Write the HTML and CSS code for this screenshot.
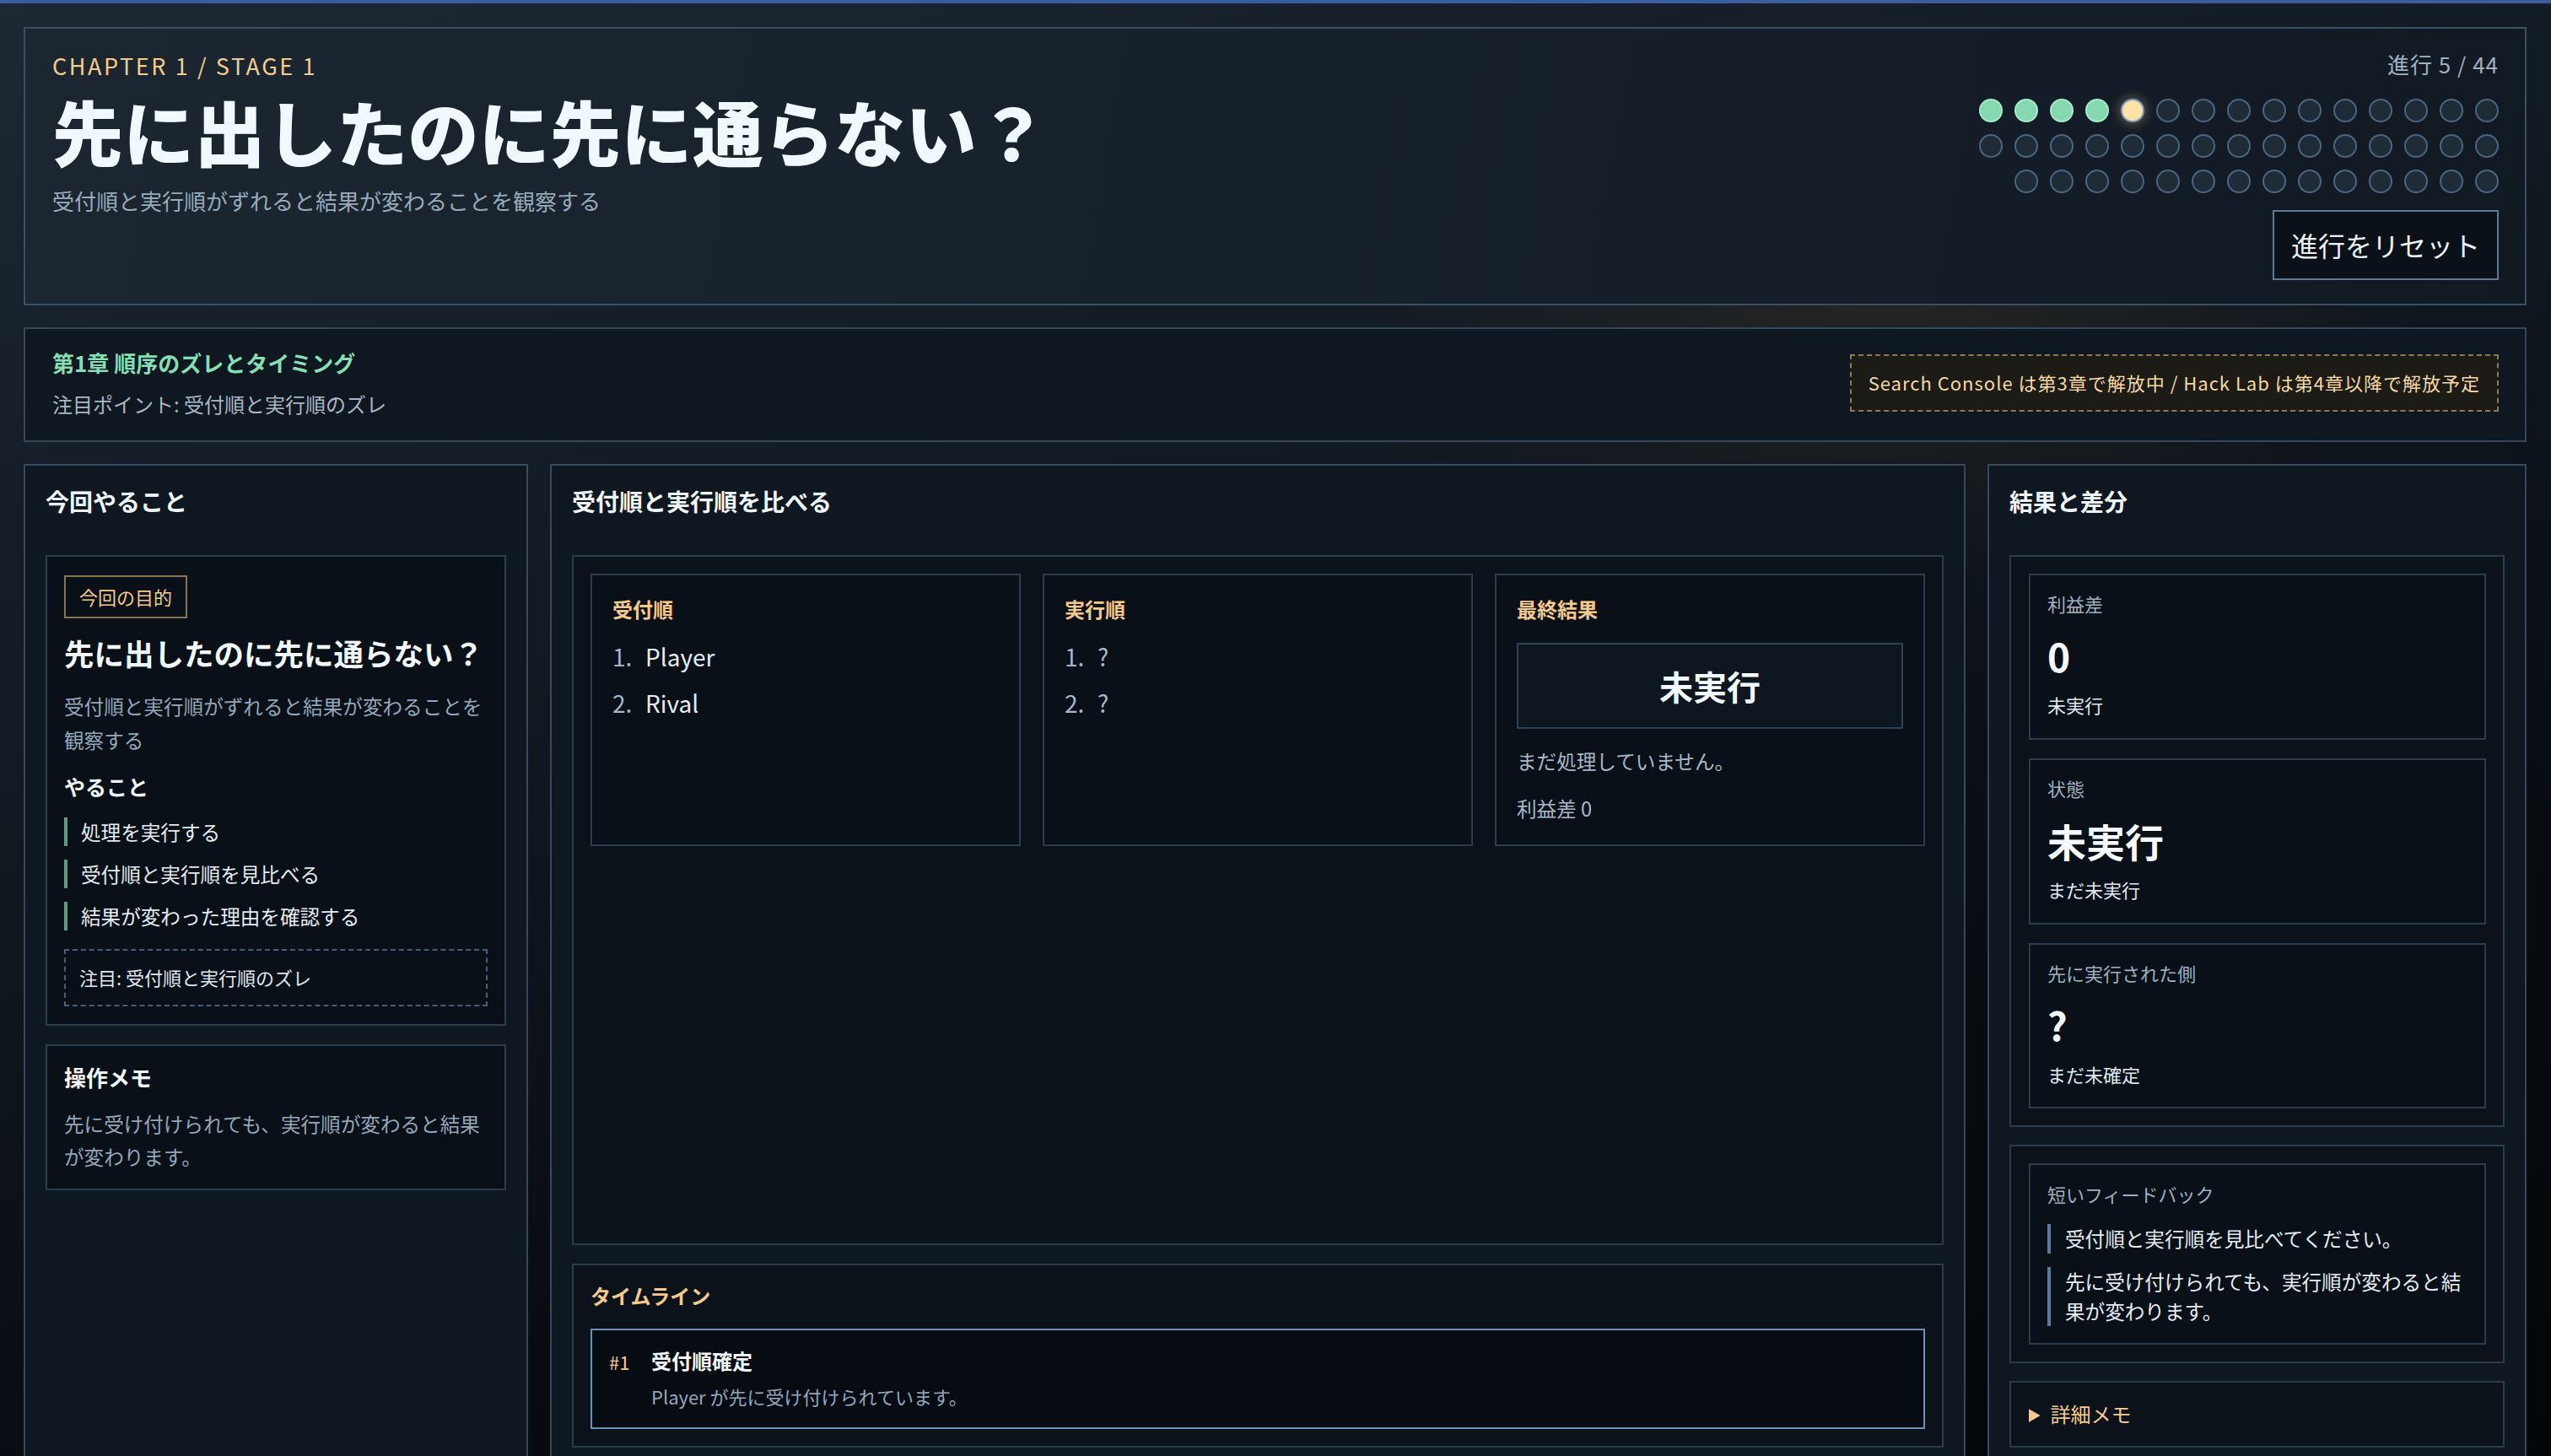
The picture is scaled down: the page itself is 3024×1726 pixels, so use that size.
FILE: index.html
```html
<!DOCTYPE html>
<html lang="ja">
<head>
	<meta charset="UTF-8">
	<title>先に出したのに先に通らない？</title>
	<link rel="stylesheet" href="styles.css">
</head>
<body>
<div class="page">
	<header class="hero">
		<div class="hero-main">
			<p class="eyebrow">CHAPTER 1 / STAGE 1</p>
			<h1 class="hero-title">先に出したのに先に通らない？</h1>
			<p class="hero-lead">受付順と実行順がずれると結果が変わることを観察する</p>
		</div>
		<div class="hero-side">
			<p class="progress-label">進行 5 / 44</p>
			<div class="dots">
				<span class="dot done"></span><span class="dot done"></span><span class="dot done"></span><span class="dot done"></span>
				<span class="dot current"></span>
				<span class="dot"></span><span class="dot"></span><span class="dot"></span><span class="dot"></span><span class="dot"></span>
				<span class="dot"></span><span class="dot"></span><span class="dot"></span><span class="dot"></span><span class="dot"></span>
				<span class="dot"></span><span class="dot"></span><span class="dot"></span><span class="dot"></span><span class="dot"></span>
				<span class="dot"></span><span class="dot"></span><span class="dot"></span><span class="dot"></span><span class="dot"></span>
				<span class="dot"></span><span class="dot"></span><span class="dot"></span><span class="dot"></span><span class="dot"></span>
				<span class="dot"></span><span class="dot"></span><span class="dot"></span><span class="dot"></span><span class="dot"></span>
				<span class="dot"></span><span class="dot"></span><span class="dot"></span><span class="dot"></span><span class="dot"></span>
				<span class="dot"></span><span class="dot"></span><span class="dot"></span><span class="dot"></span>
			</div>
			<button type="button" class="btn-reset">進行をリセット</button>
		</div>
	</header>

	<section class="chapter">
		<div>
			<p class="chapter-name">第1章 順序のズレとタイミング</p>
			<p class="chapter-point">注目ポイント: 受付順と実行順のズレ</p>
		</div>
		<p class="lock-note">Search Console は第3章で解放中 / Hack Lab は第4章以降で解放予定</p>
	</section>

	<main class="board">
		<!-- 左: 今回の課題 -->
		<aside class="panel">
			<h2 class="panel-title">今回やること</h2>
			<div class="card goal">
				<span class="tag">今回の目的</span>
				<h3 class="goal-title">先に出したのに先に通らない？</h3>
				<p class="body-text">受付順と実行順がずれると結果が変わることを観察する</p>
				<h4 class="todo-title">やること</h4>
				<ul class="todo">
					<li>処理を実行する</li>
					<li>受付順と実行順を見比べる</li>
					<li>結果が変わった理由を確認する</li>
				</ul>
				<p class="focus">注目: 受付順と実行順のズレ</p>
			</div>
			<div class="card memo">
				<h3 class="memo-title">操作メモ</h3>
				<p class="body-text">先に受け付けられても、実行順が変わると結果が変わります。</p>
			</div>
		</aside>

		<!-- 中央: 受付順と実行順 -->
		<section class="panel panel-main">
			<h2 class="panel-title">受付順と実行順を比べる</h2>
			<div class="box compare">
				<div class="compare-grid">
					<div class="card order">
						<h3 class="card-head">受付順</h3>
						<ol class="order-list">
							<li><span class="num">1.</span>Player</li>
							<li><span class="num">2.</span>Rival</li>
						</ol>
					</div>
					<div class="card order">
						<h3 class="card-head">実行順</h3>
						<ol class="order-list unknown">
							<li><span class="num">1.</span>?</li>
							<li><span class="num">2.</span>?</li>
						</ol>
					</div>
					<div class="card order">
						<h3 class="card-head">最終結果</h3>
						<div class="result">未実行</div>
						<p class="result-note">まだ処理していません。</p>
						<p class="result-note">利益差 0</p>
					</div>
				</div>
			</div>
			<div class="box timeline">
				<h3 class="card-head">タイムライン</h3>
				<div class="event">
					<span class="event-no">#1</span>
					<div>
						<p class="event-title">受付順確定</p>
						<p class="event-text">Player が先に受け付けられています。</p>
					</div>
				</div>
			</div>
		</section>

		<!-- 右: 結果 -->
		<aside class="panel">
			<h2 class="panel-title">結果と差分</h2>
			<div class="box stack">
				<div class="card stat">
					<p class="stat-label">利益差</p>
					<p class="stat-value">0</p>
					<p class="stat-sub">未実行</p>
				</div>
				<div class="card stat">
					<p class="stat-label">状態</p>
					<p class="stat-value">未実行</p>
					<p class="stat-sub">まだ未実行</p>
				</div>
				<div class="card stat">
					<p class="stat-label">先に実行された側</p>
					<p class="stat-value">?</p>
					<p class="stat-sub">まだ未確定</p>
				</div>
			</div>
			<div class="box stack feedback">
				<div class="card fb-card">
					<p class="stat-label">短いフィードバック</p>
					<ul class="fb-list">
						<li>受付順と実行順を見比べてください。</li>
						<li>先に受け付けられても、実行順が変わると結果が変わります。</li>
					</ul>
				</div>
			</div>
			<details class="box more">
				<summary>詳細メモ</summary>
				<p class="body-text">受付した順番と、実際に処理された順番は一致するとは限りません。</p>
			</details>
		</aside>
	</main>
</div>
</body>
</html>
```

FILE: styles.css
```css
*{
	box-sizing: border-box;
}
html,body{
	margin: 0;
}
body{
	min-height: 100vh;
	border-top: 4px solid #3b5d9c;
	color: #e6eef6;
	font-family: "Noto Sans CJK JP", "Noto Sans", sans-serif;
	font-size: 24px;
	background:
		radial-gradient(ellipse 900px 500px at 74% 20%, rgba(72,58,38,0.35), transparent 70%),
		linear-gradient(165deg, #1d2833 0%, #121a23 35%, #080c11 70%, #030507 100%);
	background-color: #080c11;
}
p,h1,h2,h3,h4,ul,ol{
	margin: 0;
	padding: 0;
}
ul,ol{
	list-style: none;
}
.page{
	padding: 28px 29px 0 28px;
}

/* ヘッダー */
.hero{
	display: flex;
	justify-content: space-between;
	padding: 24px 31px 28px 32px;
	border: 2px solid #3b4f64;
	background: linear-gradient(100deg, #1b2631 0%, #17212c 50%, #111923 100%);
}
.eyebrow{
	margin-top: 2px;
	font-size: 27px;
	line-height: 1.3;
	letter-spacing: 2.6px;
	color: #f4cc8d;
}
.hero-title{
	margin-top: 10px;
	font-size: 84px;
	line-height: 1.2;
	font-weight: 900;
	letter-spacing: 0.3px;
	color: #f1f8fe;
}
.hero-lead{
	margin-top: 12px;
	font-size: 26px;
	line-height: 1.5;
	color: #98abbd;
}
.hero-side{
	display: flex;
	flex-direction: column;
	align-items: flex-end;
}
.progress-label{
	font-size: 26px;
	line-height: 1.4;
	letter-spacing: 1px;
	color: #9fb0c0;
}
.dots{
	display: flex;
	flex-wrap: wrap;
	justify-content: flex-end;
	gap: 14px;
	width: 616px;
	margin-top: 23px;
}
.dot{
	width: 28px;
	height: 28px;
	border-radius: 50%;
	border: 2px solid #4b6580;
	background: #1f2b37;
}
.dot.done{
	border-color: #a6eacb;
	background: #86d8b0;
}
.dot.current{
	border-color: #7c9bbd;
	background: #fde3a8;
	box-shadow: 0 0 14px rgba(253,222,160,0.45);
}
.btn-reset{
	margin-top: 20px;
	padding: 17px 20px;
	border: 2px solid #5d7890;
	background: #0b1118;
	color: #eaf2f9;
	font-family: inherit;
	font-size: 32px;
	line-height: 1.4;
	cursor: pointer;
}

/* 章の帯 */
.chapter{
	display: flex;
	justify-content: space-between;
	align-items: center;
	margin-top: 26px;
	padding: 22px 31px 25px 32px;
	border: 2px solid #34485c;
	background: #0f1720;
}
.chapter-name{
	font-size: 26px;
	line-height: 1.4;
	font-weight: 700;
	color: #86dfb3;
}
.chapter-point{
	margin-top: 12px;
	font-size: 24px;
	line-height: 1.5;
	color: #a9b8c6;
}
.lock-note{
	padding: 16px 20px;
	border: 2px dashed #8b7a58;
	background: #1c1b16;
	font-size: 22px;
	line-height: 1.45;
	letter-spacing: 1px;
	color: #f6d9a2;
}

/* 3カラム */
.board{
	display: grid;
	grid-template-columns: 598px minmax(0,1fr) 639px;
	gap: 26px;
	margin-top: 26px;
}
.panel{
	padding: 24px;
	border: 2px solid #36495d;
	background: #0f1720;
}
.panel-main{
	display: flex;
	flex-direction: column;
}
.panel-title{
	margin-bottom: 46px;
	font-size: 28px;
	line-height: 1.3;
	font-weight: 700;
	color: #eef5fb;
}
.box{
	border: 2px solid #2b3c4d;
	background: #0b1219;
}
.card{
	border: 2px solid #2c3d4e;
	background: #0a1017;
}
.body-text{
	font-size: 23.6px;
	line-height: 40px;
	color: #93a7b9;
}

/* 左 */
.goal{
	padding: 22px 20px 21px;
}
.tag{
	display: inline-block;
	padding: 8px 16px;
	border: 2px solid #8c7350;
	font-size: 22px;
	line-height: 1.4;
	color: #f3c98b;
}
.goal-title{
	margin-top: 18px;
	margin-bottom: 20px;
	font-size: 35.5px;
	line-height: 1.3;
	font-weight: 700;
	color: #f1f8fe;
}
.todo-title{
	margin-top: 18px;
	font-size: 25px;
	line-height: 1.4;
	font-weight: 700;
	color: #eef5fb;
}
.todo{
	display: flex;
	flex-direction: column;
	gap: 16px;
	margin-top: 19px;
}
.todo li{
	padding-left: 16px;
	border-left: 4px solid #5e9c80;
	font-size: 23.6px;
	line-height: 34px;
	color: #e4ecf3;
}
.focus{
	margin-top: 22px;
	padding: 16px;
	border: 2px dashed #46607a;
	font-size: 22px;
	line-height: 1.45;
	color: #dfe8f0;
}
.memo{
	margin-top: 22px;
	padding: 20px 20px 18px;
}
.memo .body-text{
	line-height: 39px;
}
.memo-title{
	margin-bottom: 19px;
	font-size: 26px;
	line-height: 1.3;
	font-weight: 700;
	color: #eef5fb;
}

/* 中央 */
.compare{
	flex: 1;
	padding: 20px;
}
.compare-grid{
	display: grid;
	grid-template-columns: repeat(3, minmax(0,1fr));
	gap: 26px;
}
.order{
	padding: 23px 24px 25px;
}
.card-head{
	font-size: 24px;
	line-height: 1.4;
	font-weight: 700;
	color: #f5c98a;
}
.order-list{
	display: flex;
	flex-direction: column;
	gap: 16px;
	margin-top: 20px;
}
.order-list li{
	font-size: 28px;
	line-height: 1.4;
	color: #e3edf6;
}
.order-list .num{
	display: inline-block;
	width: 39px;
	color: #a6b9ca;
}
.order-list.unknown li{
	color: #a6b9ca;
}
.result{
	margin-top: 23px;
	padding: 23px;
	border: 2px solid #2f4356;
	background: #0e1620;
	text-align: center;
	font-size: 40px;
	line-height: 1.3;
	font-weight: 700;
	color: #f1f8fe;
}
.result-note{
	margin-top: 21px;
	font-size: 23.6px;
	line-height: 1.5;
	color: #a9b8c6;
}
.timeline{
	margin-top: 22px;
	padding: 19px 20px 20px;
}
.event{
	display: grid;
	grid-template-columns: 50px 1fr;
	margin-top: 23px;
	padding: 19px 20px 20px;
	border: 2px solid #6a8fbb;
	background: #070c12;
}
.event-no{
	padding-top: 3px;
	font-size: 22px;
	line-height: 1.4;
	color: #f5c98a;
}
.event-title{
	font-size: 24px;
	line-height: 1.4;
	font-weight: 700;
	color: #f1f8fe;
}
.event-text{
	margin-top: 10px;
	font-size: 22px;
	line-height: 1.45;
	color: #93a7b9;
}

/* 右 */
.stack{
	display: flex;
	flex-direction: column;
	gap: 22px;
	padding: 20px 20px 20px 21px;
}
.stat{
	padding: 18px 20px 24px;
}
.stat-label{
	font-size: 22px;
	line-height: 1.4;
	color: #9fb0c0;
}
.stat-value{
	margin-top: 19px;
	font-size: 46px;
	line-height: 1.2;
	font-weight: 700;
	color: #f4faff;
}
.stat-sub{
	margin-top: 15px;
	font-size: 22px;
	line-height: 1.4;
	color: #dfe8f0;
}
.feedback{
	margin-top: 21px;
}
.fb-card{
	padding: 19px 20px 20px;
}
.fb-list{
	display: flex;
	flex-direction: column;
	gap: 16px;
	margin-top: 20px;
}
.fb-list li{
	padding-left: 17px;
	border-left: 4px solid #5b7aa1;
	font-size: 23.6px;
	line-height: 35px;
	color: #e4ecf3;
}
.more{
	margin-top: 21px;
	padding: 20px 21px;
}
.more summary{
	font-size: 24px;
	line-height: 1.45;
	color: #f5c98a;
	cursor: pointer;
}
.more .body-text{
	margin-top: 12px;
}
```
